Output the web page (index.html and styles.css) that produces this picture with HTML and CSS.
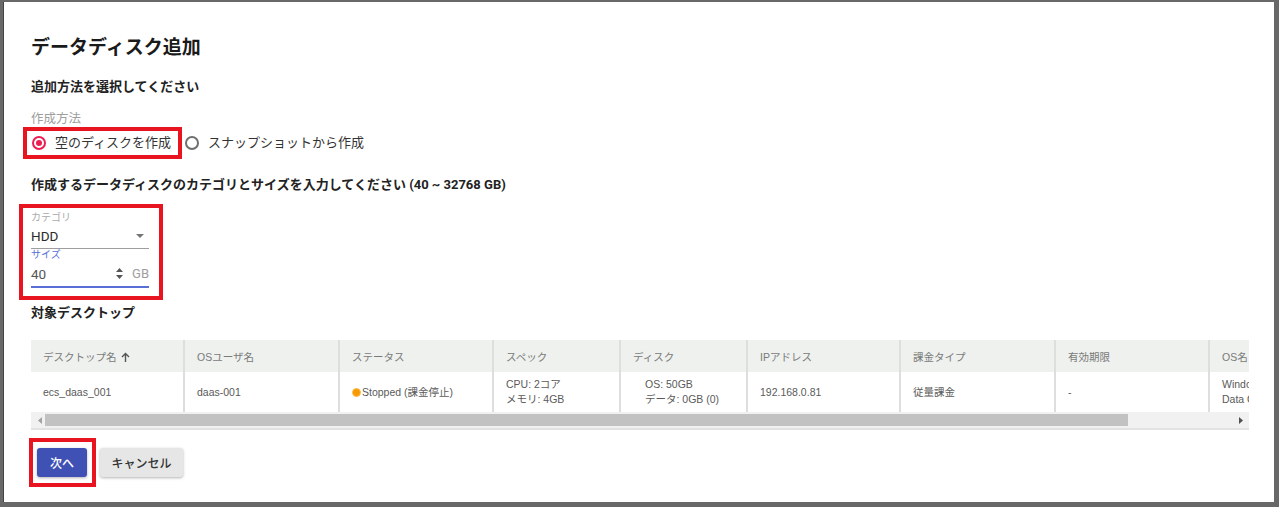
FILE: index.html
```html
<!DOCTYPE html>
<html lang="ja">
<head>
<meta charset="utf-8">
<title>データディスク追加</title>
<link rel="stylesheet" href="styles.css">
</head>
<body>
<div class="dialog">
  <h1 class="title">データディスク追加</h1>
  <div class="section-title">追加方法を選択してください</div>
  <div class="field-label">作成方法</div>
  <div class="radio-row">
    <div class="mark">
      <label class="radio">
        <span class="radio-circle checked"><span class="dot"></span></span>
        <span class="radio-text">空のディスクを作成</span>
      </label>
    </div>
    <label class="radio second">
      <span class="radio-circle"></span>
      <span class="radio-text">スナップショットから作成</span>
    </label>
  </div>

  <div class="section-title s2">作成するデータディスクのカテゴリとサイズを入力してください (40 ~ 32768 GB)</div>

  <div class="mark fields">
    <div class="small-label">カテゴリ</div>
    <div class="select">
      <span class="value">HDD</span>
      <svg class="caret" width="8" height="4" viewBox="0 0 8 4"><path d="M0 0h8L4 4z" fill="#757575"/></svg>
    </div>
    <div class="small-label focused">サイズ</div>
    <div class="number">
      <span class="value num">40</span>
      <svg class="spin" width="7" height="11" viewBox="0 0 7 11"><path d="M3.5 0L7 4H0z M0 7h7L3.5 11z" fill="#555"/></svg>
      <span class="unit">GB</span>
    </div>
  </div>

  <div class="section-title s3">対象デスクトップ</div>

  <div class="table-card">
    <div class="table-clip">
      <table class="grid">
        <colgroup>
          <col class="c-name"><col class="c-user"><col class="c-status"><col class="c-spec"><col class="c-disk"><col class="c-ip"><col class="c-bill"><col class="c-exp"><col class="c-os">
        </colgroup>
        <thead>
          <tr>
            <th>デスクトップ名 <svg class="sort" width="9" height="10" viewBox="0 0 9 10"><path d="M4.5 10V1.5M1 5l3.5-3.5L8 5" fill="none" stroke="#555" stroke-width="1.4"/></svg></th>
            <th>OSユーザ名</th>
            <th>ステータス</th>
            <th>スペック</th>
            <th>ディスク</th>
            <th>IPアドレス</th>
            <th>課金タイプ</th>
            <th>有効期限</th>
            <th class="last">OS名</th>
          </tr>
        </thead>
        <tbody>
          <tr>
            <td>ecs_daas_001</td>
            <td>daas-001</td>
            <td><span class="status-dot"></span>Stopped (課金停止)</td>
            <td>CPU: 2コア<br>メモリ: 4GB</td>
            <td class="disk">OS: 50GB<br>データ: 0GB (0)</td>
            <td>192.168.0.81</td>
            <td>従量課金</td>
            <td>-</td>
            <td class="last">Windows Server<br>Data Center</td>
          </tr>
        </tbody>
      </table>
    </div>
    <div class="hscroll">
      <svg class="arrow" width="4" height="7" viewBox="0 0 4 7"><path d="M4 0v7L0 3.5z" fill="#a3a3a3"/></svg>
      <div class="track"><div class="thumb"></div></div>
      <svg class="arrow" width="4" height="7" viewBox="0 0 4 7"><path d="M0 0v7l4-3.5z" fill="#505050"/></svg>
    </div>
  </div>

  <div class="actions">
    <div class="mark btn-mark">
      <button class="btn primary">次へ</button>
    </div>
    <button class="btn secondary">キャンセル</button>
  </div>
</div>
</body>
</html>
```

FILE: styles.css
```css
html, body {
  margin: 0;
  padding: 0;
  height: 507px;
  overflow: hidden;
}
body {
  background: #686868;
  font-family: Roboto, "Noto Sans CJK JP", sans-serif;
  color: #222;
  padding: 2px 5px 5px 3px;
  box-sizing: border-box;
}
.dialog {
  background: #fff;
  height: 500px;
  box-sizing: border-box;
  padding: 32px 0 0 28px;
  overflow: hidden;
  box-shadow: inset 1px 0 0 #444;
}
.title {
  margin: 0;
  font-size: 19px;
  line-height: 28px;
  font-weight: 700;
  color: #1a1a1a;
}
.section-title {
  margin-top: 15px;
  font-size: 13px;
  line-height: 20px;
  font-weight: 700;
  color: #222;
}
.section-title.s2 { margin-top: 20px; }
.section-title.s3 { margin-top: 7px; }
.field-label {
  margin-top: 13px;
  font-size: 12.5px;
  line-height: 18px;
  color: #9e9e9e;
}
.mark {
  outline: 4px solid #e8141f;
}
.radio-row {
  display: flex;
  align-items: center;
  margin-top: 3px;
  margin-left: -4px;
}
.radio-row .mark {
  width: 151px;
  height: 24px;
  display: flex;
  align-items: center;
}
.radio {
  display: flex;
  align-items: center;
  font-size: 13px;
  color: #333;
}
.radio-circle {
  width: 14px;
  height: 14px;
  box-sizing: border-box;
  border: 2px solid #6f6f6f;
  border-radius: 50%;
  display: inline-flex;
  align-items: center;
  justify-content: center;
}
.radio-circle.checked {
  border-color: #ec1d52;
}
.radio-circle .dot {
  width: 6px;
  height: 6px;
  border-radius: 50%;
  background: #ec1d52;
}
.mark .radio { margin-left: 5px; }
.radio-text { margin-left: 9px; line-height: 18px; }
.radio.second { margin-left: 7px; }

.fields {
  margin-top: 13px;
  margin-left: -8px;
  width: 136px;
  padding: 3px 10px 8px 8px;
  box-sizing: border-box;
}
.small-label {
  font-size: 10px;
  line-height: 13px;
  color: #aaa;
}
.small-label.focused {
  color: #5a6fd6;
  line-height: 12px;
}
.select, .number {
  display: flex;
  align-items: center;
  height: 24px;
  border-bottom: 1px solid #9e9e9e;
}
.number {
  border-bottom: 2px solid #5a6fd6;
  height: 25px;
}
.value {
  font-size: 13.5px;
  font-weight: 400;
  color: #2a2a2a;
  flex: 1;
}
.value.num { color: #555; }
.caret { margin-right: 5px; }
.spin { margin-right: 9px; }
.unit {
  font-size: 13px;
  color: #9e9e9e;
}

.table-card {
  margin-top: 17px;
  width: 1218px;
  overflow: hidden;
  border-bottom: 2px solid #e2e2e2;
}
.table-clip {
  width: 1218px;
  overflow: hidden;
  contain: paint;
}
.grid {
  border-collapse: collapse;
  table-layout: fixed;
  width: 1300px;
  font-family: "Liberation Sans", "Noto Sans CJK JP", sans-serif;
  font-size: 10.5px;
}
.c-name { width: 153px; }
.c-user { width: 155px; }
.c-status { width: 154px; }
.c-spec { width: 127px; }
.c-disk { width: 127px; }
.c-ip { width: 153px; }
.c-bill { width: 155px; }
.c-exp { width: 154px; }
.c-os { width: 122px; }
.grid th {
  background: #eef1ee;
  color: #7a7a7a;
  font-weight: 400;
  text-align: left;
  height: 32px;
  padding: 0 12px;
  box-sizing: border-box;
  white-space: nowrap;
  overflow: hidden;
}
.grid td {
  height: 40px;
  padding: 0 12px;
  color: #5a5a5a;
  line-height: 15px;
  white-space: nowrap;
  overflow: hidden;
}
.grid th + th, .grid td + td {
  border-left: 2px solid #dedede;
}
.grid td.disk { padding-left: 24px; }
.sort { vertical-align: -1px; margin-left: 2px; }
.status-dot {
  display: inline-block;
  width: 9px;
  height: 9px;
  box-sizing: border-box;
  border-radius: 50%;
  background: #f59a00;
  border: 1.5px solid #ffbd4a;
  margin-right: 1px;
  vertical-align: -1px;
}
.hscroll {
  display: flex;
  align-items: center;
  height: 16px;
  background: #f1f1f1;
  padding: 0 6px 0 7px;
  gap: 3px;
}
.hscroll .track {
  flex: 1;
  height: 12px;
}
.hscroll .thumb {
  width: 1083px;
  height: 12px;
  background: #c2c2c2;
}

.actions {
  display: flex;
  align-items: center;
  margin-top: 12px;
}
.btn-mark {
  margin-left: 2px;
  padding: 6px 5px 6px 4px;
}
.btn {
  border: none;
  height: 29px;
  border-radius: 3px;
  font-family: Roboto, "Noto Sans CJK JP", sans-serif;
  font-size: 12px;
  font-weight: 500;
  box-shadow: 0 1px 3px rgba(0,0,0,0.3);
}
.btn.primary {
  width: 50px;
  background: #3f51b5;
  color: #fff;
}
.btn.secondary {
  margin-left: 8px;
  width: 83px;
  background: #e6e6e6;
  color: #333;
}
```
